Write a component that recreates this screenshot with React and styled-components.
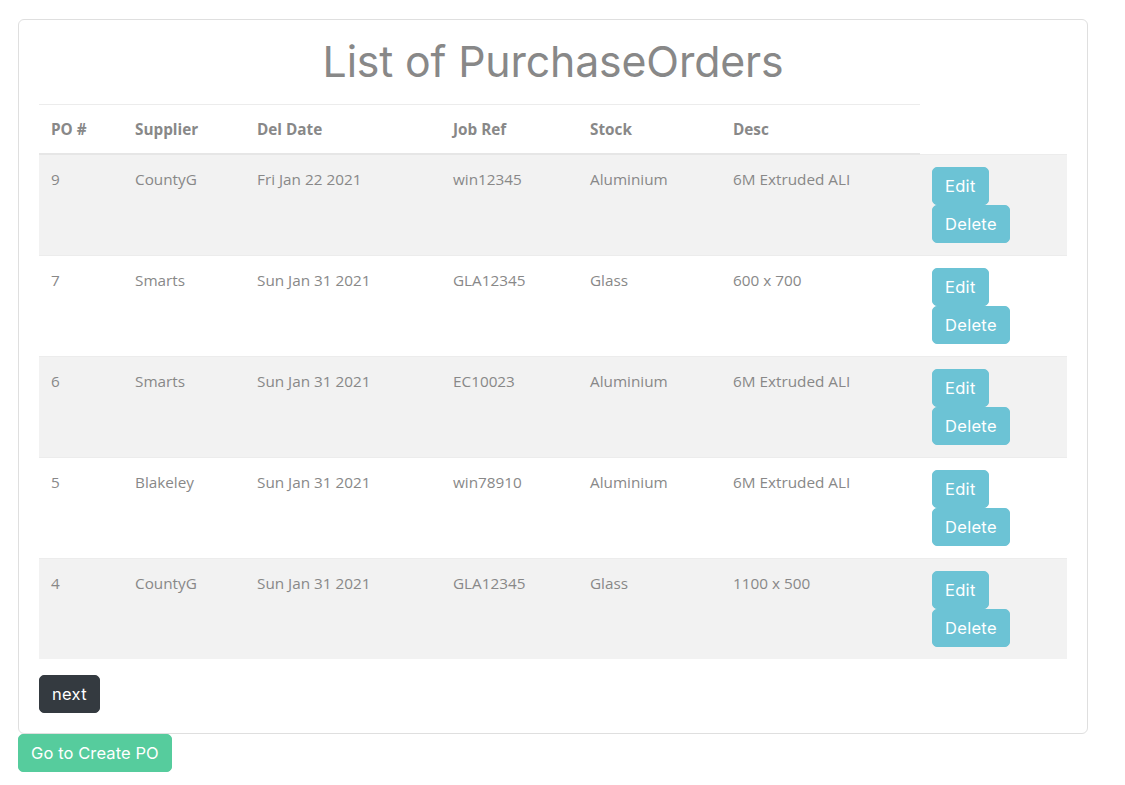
import React from "react";
import styled, { createGlobalStyle } from "styled-components";

const Global = createGlobalStyle`
  html, body { margin: 0; padding: 0; background: #fff; }
  body {
    font-family: "Open Sans", "Noto Sans", sans-serif;
    font-size: 15.3px;
    color: #888;
  }
`;

const Page = styled.div`
  padding: 19px 0 0 18px;
`;

const Card = styled.div`
  width: 1070px;
  box-sizing: border-box;
  border: 1px solid #dfdfdf;
  border-radius: 6px;
  padding: 19px 20px 20px 20px;
`;

const Title = styled.h1`
  margin: 0 0 19px;
  font-family: "Inter", "DejaVu Sans", sans-serif;
  font-weight: 400;
  font-size: 42.8px;
  line-height: 46px;
  text-align: center;
  color: #888;
  letter-spacing: -0.15px;
`;

const Table = styled.table`
  width: 1028px;
  table-layout: fixed;
  border-collapse: collapse;
  margin-bottom: 16px;
`;

const Th = styled.th`
  text-align: left;
  font-weight: 700;
  padding: 12px;
  line-height: 24px;
  border-top: 1px solid #ececec;
  border-bottom: 2px solid #e6e6e6;
  color: #888;
`;

const Row = styled.tr`
  background: ${(p) => (p.$striped ? "#f2f2f2" : "#fff")};
`;

const Td = styled.td`
  padding: 12px;
  line-height: 24px;
  vertical-align: top;
  border-top: 1px solid #ececec;
  color: #888;
  white-space: nowrap;
`;

const Actions = styled.div`
  display: flex;
  flex-direction: column;
  align-items: flex-start;
`;

const Button = styled.button`
  font-family: "Inter", "DejaVu Sans", sans-serif;
  font-size: 16.5px;
  letter-spacing: 0.3px;
  line-height: 24px;
  padding: 6px 12px;
  border: 1px solid ${(p) => p.$bg};
  background: ${(p) => p.$bg};
  color: #fff;
  border-radius: 5px;
  cursor: pointer;
  box-sizing: border-box;
  height: 38px;
`;

const CreateButton = styled(Button)`
  display: block;
  margin: 0;
  letter-spacing: 0.1px;
`;

const cols = [84, 122, 196, 137, 143, 199, 147];

const rows = [
  ["9", "CountyG", "Fri Jan 22 2021", "win12345", "Aluminium", "6M Extruded ALI"],
  ["7", "Smarts", "Sun Jan 31 2021", "GLA12345", "Glass", "600 x 700"],
  ["6", "Smarts", "Sun Jan 31 2021", "EC10023", "Aluminium", "6M Extruded ALI"],
  ["5", "Blakeley", "Sun Jan 31 2021", "win78910", "Aluminium", "6M Extruded ALI"],
  ["4", "CountyG", "Sun Jan 31 2021", "GLA12345", "Glass", "1100 x 500"],
];

const headers = ["PO #", "Supplier", "Del Date", "Job Ref", "Stock", "Desc"];

export default function App() {
  return (
    <>
      <Global />
      <Page>
        <Card>
          <Title>List of PurchaseOrders</Title>
          <Table>
            <colgroup>
              {cols.map((w, i) => (
                <col key={i} style={{ width: w }} />
              ))}
            </colgroup>
            <thead>
              <tr>
                {headers.map((h) => (
                  <Th key={h}>{h}</Th>
                ))}
              </tr>
            </thead>
            <tbody>
              {rows.map((r, i) => (
                <Row key={r[0]} $striped={i % 2 === 0}>
                  {r.map((c, j) => (
                    <Td key={j}>{c}</Td>
                  ))}
                  <Td>
                    <Actions>
                      <Button $bg="#6cc3d5">Edit</Button>
                      <Button $bg="#6cc3d5">Delete</Button>
                    </Actions>
                  </Td>
                </Row>
              ))}
            </tbody>
          </Table>
          <Button $bg="#343a40">next</Button>
        </Card>
        <CreateButton $bg="#56cc9d">Go to Create PO</CreateButton>
      </Page>
    </>
  );
}
